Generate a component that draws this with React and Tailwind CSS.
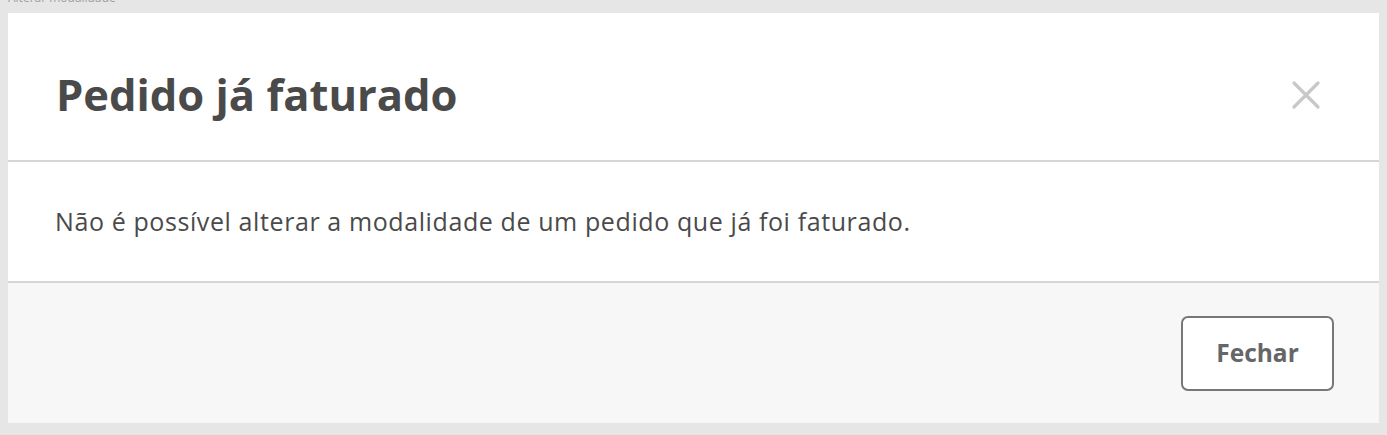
import React from "react";

export default function App() {
  return (
    <div
      className="w-[1387px] h-[435px] overflow-hidden bg-[#e6e6e6] px-2"
      style={{ fontFamily: "'Open Sans', Lato, sans-serif" }}
    >
      {/* page label peeking above the modal */}
      <div className="h-[13px] overflow-hidden">
        <p className="-mt-[9px] text-[12px] leading-[14px] text-[#a0a0a0]">Alterar modalidade</p>
      </div>

      <div className="flex flex-col bg-white">
        <header className="flex h-[149px] items-center justify-between border-b-2 border-[#d6d6d6] pt-4 pl-[48px] pr-[58px]">
          <h1 className="text-[43.5px] font-bold text-[#4a4a4a]">Pedido já faturado</h1>
          <button className="text-[#c8c8c8]" aria-label="Fechar">
            <svg width="30" height="30" viewBox="0 0 30 30" fill="none" stroke="currentColor" strokeWidth="3.2" strokeLinecap="round">
              <path d="M3 3L27 27M27 3L3 27" />
            </svg>
          </button>
        </header>

        <div className="flex h-[121px] items-center border-b-2 border-[#d6d6d6] px-[47px]">
          <p className="text-[25px] tracking-[0.6px] text-[#4a4a4a]">
            Não é possível alterar a modalidade de um pedido que já foi faturado.
          </p>
        </div>

        <footer className="flex h-[140px] items-center justify-end bg-[#f7f7f7] px-[45px]">
          <button className="h-[75px] w-[153px] rounded-[7px] border-2 border-[#777777] bg-white text-[24.5px] font-bold text-[#666666]">
            Fechar
          </button>
        </footer>
      </div>
    </div>
  );
}
